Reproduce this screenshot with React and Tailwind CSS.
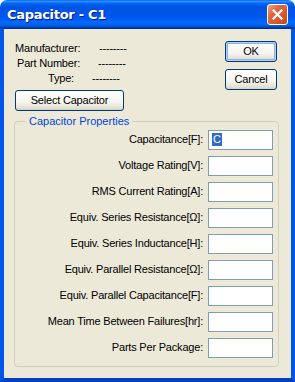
const fields = [
  'Capacitance[F]:',
  'Voltage Rating[V]:',
  'RMS Current Rating[A]:',
  'Equiv. Series Resistance[Ω]:',
  'Equiv. Series Inductance[H]:',
  'Equiv. Parallel Resistance[Ω]:',
  'Equiv. Parallel Capacitance[F]:',
  'Mean Time Between Failures[hr]:',
  'Parts Per Package:',
];

const XpButton = ({ children, className = '', isDefault }) => (
  <button
    className={`h-[21px] rounded-[3px] border border-[#003c74] bg-[linear-gradient(#ffffff,#f5f4ee_60%,#e3e0d3_90%,#d6d0c5)] text-[11px] text-black leading-none ${
      isDefault ? 'shadow-[inset_0_0_0_1px_#b7d0f5,inset_0_0_0_2px_#8fb1ea]' : ''
    } ${className}`}
  >
    {children}
  </button>
);

export default function App() {
  return (
    <div className="w-[295px] h-[382px] flex flex-col font-['Liberation_Sans',Arial,sans-serif] text-[11px] tracking-[-0.2px] text-black select-none">
      {/* title bar */}
      <div className="h-[29px] shrink-0 rounded-t-[7px] flex items-center justify-between pl-[7px] pr-[7px] bg-[linear-gradient(#0058ee_0%,#3593ff_4%,#288eff_6%,#127dff_8%,#036ffc_10%,#0262ee_14%,#0057e5_20%,#0054e3_24%,#0055eb_56%,#005bf5_66%,#026afe_76%,#0062ef_86%,#0052d6_92%,#0040ab_94%,#003092_100%)]">
        <span className="font-['DejaVu_Sans',sans-serif] font-bold text-[13px] text-white tracking-[-0.3px] [text-shadow:1px_1px_#0a1883] pt-[1px]">
          Capacitor - C1
        </span>
        <div className="w-[21px] h-[21px] rounded-[3px] border border-white bg-[linear-gradient(135deg,#f0a08a,#e2673f_35%,#c8461c)] flex items-center justify-center">
          <svg width="11" height="11" viewBox="0 0 11 11">
            <path d="M1.5 1.5 L9.5 9.5 M9.5 1.5 L1.5 9.5" stroke="#fff" strokeWidth="2.2" strokeLinecap="square" />
          </svg>
        </div>
      </div>

      {/* client area inside window frame */}
      <div className="flex-1 border-x-4 border-b-4 border-x-[#0055ea] border-b-[#0041c4] bg-[#ece9d8] flex flex-col">
        <div className="flex justify-between pt-[12px] pl-[11px] pr-[14px]">
          <div className="flex flex-col">
            <div className="flex h-[15px] items-center">
              <span className="w-[84px]">Manufacturer:</span>
              <span>--------</span>
            </div>
            <div className="flex h-[15px] items-center pl-[2px]">
              <span className="w-[81px]">Part Number:</span>
              <span>--------</span>
            </div>
            <div className="flex h-[15px] items-center pl-[33px]">
              <span className="w-[44px]">Type:</span>
              <span>--------</span>
            </div>
            <XpButton className="w-[109px] mt-[4px]">Select Capacitor</XpButton>
          </div>
          <div className="flex flex-col gap-[7px]">
            <XpButton className="w-[52px]" isDefault>OK</XpButton>
            <XpButton className="w-[52px]">Cancel</XpButton>
          </div>
        </div>

        <fieldset className="ml-[10px] mr-[12px] mt-[2px] border border-[#d0d0bf] rounded-[4px] pl-[6px] pr-[5px] pt-0 pb-[8px] flex flex-col gap-[6px]">
          <legend className="ml-[5px] px-[3px] text-[#0046d5] text-[11px] tracking-normal">Capacitor Properties</legend>
          {fields.map((label, i) => (
            <div key={label} className="flex items-center justify-end gap-[5px]">
              <span className="text-right whitespace-nowrap">{label}</span>
              <div className="w-[65px] h-[20px] border border-[#7f9db9] bg-white flex items-center pl-[3px]">
                {i === 0 && <span className="bg-[#316ac5] text-white leading-[13px] px-[1px]">C</span>}
              </div>
            </div>
          ))}
        </fieldset>
      </div>
    </div>
  );
}
